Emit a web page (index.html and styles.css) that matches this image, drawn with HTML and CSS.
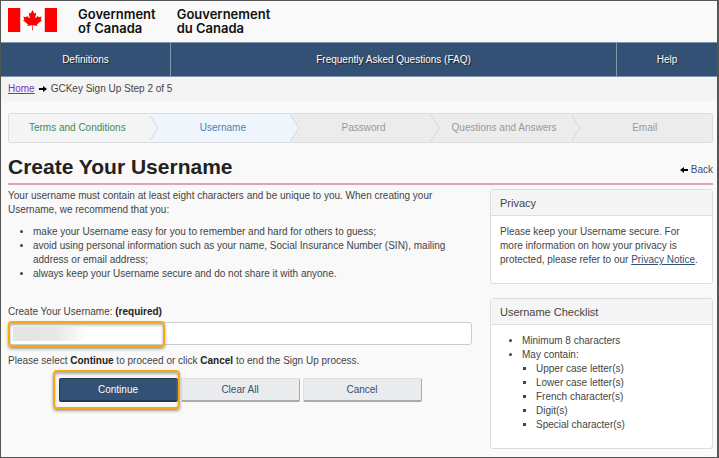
FILE: index.html
```html
<!DOCTYPE html>
<html lang="en">
<head>
    <meta charset="UTF-8">
    <meta name="viewport" content="width=device-width,initial-scale=1.0">
    <title>Create Your Username</title>
    <link rel="stylesheet" href="styles.css">
</head>
<body>
    <header class="banner">
        <svg class="flag" viewBox="-4800 -2400 9600 4800" preserveAspectRatio="none" role="img" aria-label="Flag of Canada">
            <path fill="#fff" d="M-2400-2400h4800v4800h-4800z"/>
            <path fill="#f00" d="M-4800-2400h2400v4800h-2400zM2400-2400h2400v4800h-2400z"/>
            <path fill="#f00" d="m-90 2030 45-863a95 95 0 0 0-111-98l-859 151 116-320a65 65 0 0 0-20-73l-941-762 212-99a65 65 0 0 0 34-79l-186-572 542 115a65 65 0 0 0 73-38l105-247 423 454a65 65 0 0 0 111-57l-204-1052 327 189a65 65 0 0 0 91-27l332-652 332 652a65 65 0 0 0 91 27l327-189-204 1052a65 65 0 0 0 111 57l423-454 105 247a65 65 0 0 0 73 38l542-115-186 572a65 65 0 0 0 34 79l212 99-941 762a65 65 0 0 0-20 73l116 320-859-151a95 95 0 0 0-111 98l45 863z"/>
        </svg>
        <div class="signature">Government<br>of Canada</div>
        <div class="signature" lang="fr">Gouvernement<br>du Canada</div>
    </header>

    <nav class="menu">
        <a href="#">Definitions</a>
        <a href="#">Frequently Asked Questions (FAQ)</a>
        <a href="#">Help</a>
    </nav>

    <div class="breadcrumb">
        <a href="#">Home</a>
        <svg class="arrow" viewBox="0 0 8 8"><path d="M0 3h4V1l4 3-4 3V5H0z"/></svg>
        <span>GCKey Sign Up Step 2 of 5</span>
    </div>

    <main class="content">
        <ol class="steps">
            <li class="done">Terms and Conditions</li>
            <li class="current">Username</li>
            <li>Password</li>
            <li>Questions and Answers</li>
            <li>Email</li>
        </ol>

        <div class="title">
            <h1>Create Your Username</h1>
            <a class="back" href="#"><svg class="arrow" viewBox="0 0 8 8"><path d="M8 3H4V1L0 4l4 3V5h4z"/></svg>Back</a>
        </div>

        <div class="columns">
            <form class="signup">
                <p>Your username must contain at least eight characters and be unique to you. When creating your Username, we recommend that you:</p>
                <ul class="tips">
                    <li>make your Username easy for you to remember and hard for others to guess;</li>
                    <li>avoid using personal information such as your name, Social Insurance Number (SIN), mailing address or email address;</li>
                    <li>always keep your Username secure and do not share it with anyone.</li>
                </ul>
                <label for="username">Create Your Username: <strong>(required)</strong></label>
                <div class="field">
                    <input type="text" id="username">
                    <span class="highlight highlight-field"></span>
                </div>
                <p>Please select <strong>Continue</strong> to proceed or click <strong>Cancel</strong> to end the Sign Up process.</p>
                <div class="buttons">
                    <div class="marked">
                        <button type="submit" class="btn primary">Continue</button>
                        <span class="highlight highlight-button"></span>
                    </div>
                    <button type="reset" class="btn">Clear All</button>
                    <button type="button" class="btn">Cancel</button>
                </div>
            </form>

            <aside class="side">
                <section class="panel">
                    <h2>Privacy</h2>
                    <div class="panel-body">
                        <p>Please keep your Username secure. For more information on how your privacy is protected, please refer to our <a href="#">Privacy Notice</a>.</p>
                    </div>
                </section>
                <section class="panel">
                    <h2>Username Checklist</h2>
                    <div class="panel-body">
                        <ul class="checklist">
                            <li>Minimum 8 characters</li>
                            <li>May contain:
                                <ul>
                                    <li>Upper case letter(s)</li>
                                    <li>Lower case letter(s)</li>
                                    <li>French character(s)</li>
                                    <li>Digit(s)</li>
                                    <li>Special character(s)</li>
                                </ul>
                            </li>
                        </ul>
                    </div>
                </section>
            </aside>
        </div>
    </main>
</body>
</html>
```

FILE: styles.css
```css
*{box-sizing: border-box;}
body{margin: 0;min-height: 100vh;border: 1px solid #555;border-right-width: 2px;background-color: #f9f9f9;color: #444;font: 10px/14px "Liberation Sans", Arial, sans-serif;}
h1, h2, p, ul, ol{margin: 0;padding: 0;}
a{color: #335075;}
strong{color: #222;}

.banner{display: flex;gap: 21px;padding: 6px 7px 7px;}
.flag{width: 49px;height: 24px;margin-top: 1px;}
.signature{color: #111;font-family: Inter, "Liberation Sans", sans-serif;font-size: 13px;font-weight: 600;}

.menu{display: grid;grid-template-columns: 169fr 446fr 101fr;border-top: 1px solid #8496ab;border-bottom: 1px solid #8496ab;background-color: #335075;}
.menu a{padding: 10px 0 9px;color: #fff;text-align: center;text-decoration: none;text-shadow: 1px 1px 1px #222;}
.menu a + a{border-left: 1px solid #8496ab;}

.breadcrumb{display: flex;align-items: center;gap: 4px;padding: 5px 7px;background-color: #f4f4f4;}
.breadcrumb a{color: #7834bc;}
.arrow{width: 8px;height: 8px;fill: #000;}

.content{padding: 12px 4px 7px 7px;}

.steps{display: grid;grid-template-columns: repeat(5, 1fr);list-style: none;border: 1px solid #ddd;border-radius: 3px;background-color: #ececec;overflow: hidden;}
.steps li{position: relative;padding: 7px 0 7px 6px;background-color: #ececec;color: #999;text-align: center;}
.steps li:first-child{padding: 7px 4px 7px 0;}
.steps li::before, .steps li::after{content: "";position: absolute;top: 0;left: 100%;z-index: 1;width: 9px;height: 100%;background-color: #d8d8d8;clip-path: polygon(0 0, 100% 50%, 0 100%);}
.steps li::after{left: calc(100% - 1px);background-color: inherit;}
.steps li:last-child::before, .steps li:last-child::after{display: none;}
.steps .done{background-color: #f3f4f6;color: #458a50;}
.steps .current{background-color: #eff5fd;color: #4684b0;}

.title{display: flex;justify-content: space-between;align-items: flex-end;padding: 10px 0 2px;border-bottom: 2px solid #dea5aa;}
.title h1{color: #222;font-size: 21px;line-height: 28px;}
.back{display: flex;align-items: center;gap: 3px;padding-bottom: 4px;text-decoration: none;}

.columns{display: grid;grid-template-columns: 464fr 223fr;gap: 18px;padding-top: 4px;}
.tips{padding: 8px 0 24px 25px;}
.signup label{display: block;padding-bottom: 3px;}
.field{position: relative;margin-bottom: 9px;}
.field input{display: block;width: 100%;height: 23px;padding: 0 6px;border: 1px solid #ccc;border-radius: 3px;background: #fff linear-gradient(to right, #e4e4e4, #e8e8e8 60%, #fff) no-repeat 4px 4px / 74px 14px;color: #444;font: inherit;}
.highlight{position: absolute;border: 2px solid #f9a90f;border-radius: 4px;box-shadow: 0 2px 3px #999, inset 0 2px 3px #aaa;pointer-events: none;}
.highlight-field{top: -1px;bottom: -2px;left: 0;width: 157px;}
.highlight-button{inset: -8px -2px -7px -6px;}

.buttons{display: flex;justify-content: center;gap: 3px;padding-top: 10px;}
.marked{position: relative;}
.btn{width: 119px;height: 24px;border: 1px solid #dcdee1;border-right-color: #aaa;border-bottom: 2px solid #aaa;border-radius: 2px;background-color: #eaebed;color: #335075;font: inherit;}
.primary{border-color: #243850;background-color: #335075;color: #fff;}

.side{display: grid;gap: 14px;align-content: start;}
.panel{border: 1px solid #ddd;border-radius: 3px;background-color: #fff;}
.panel h2{padding: 6px 9px 5px;border-bottom: 1px solid #ddd;background-color: #f5f5f5;font-size: 11px;font-weight: normal;}
.panel-body{padding: 9px 9px 16px;}
.checklist{padding-left: 22px;}
.checklist ul{padding-left: 14px;list-style: square;}
```
